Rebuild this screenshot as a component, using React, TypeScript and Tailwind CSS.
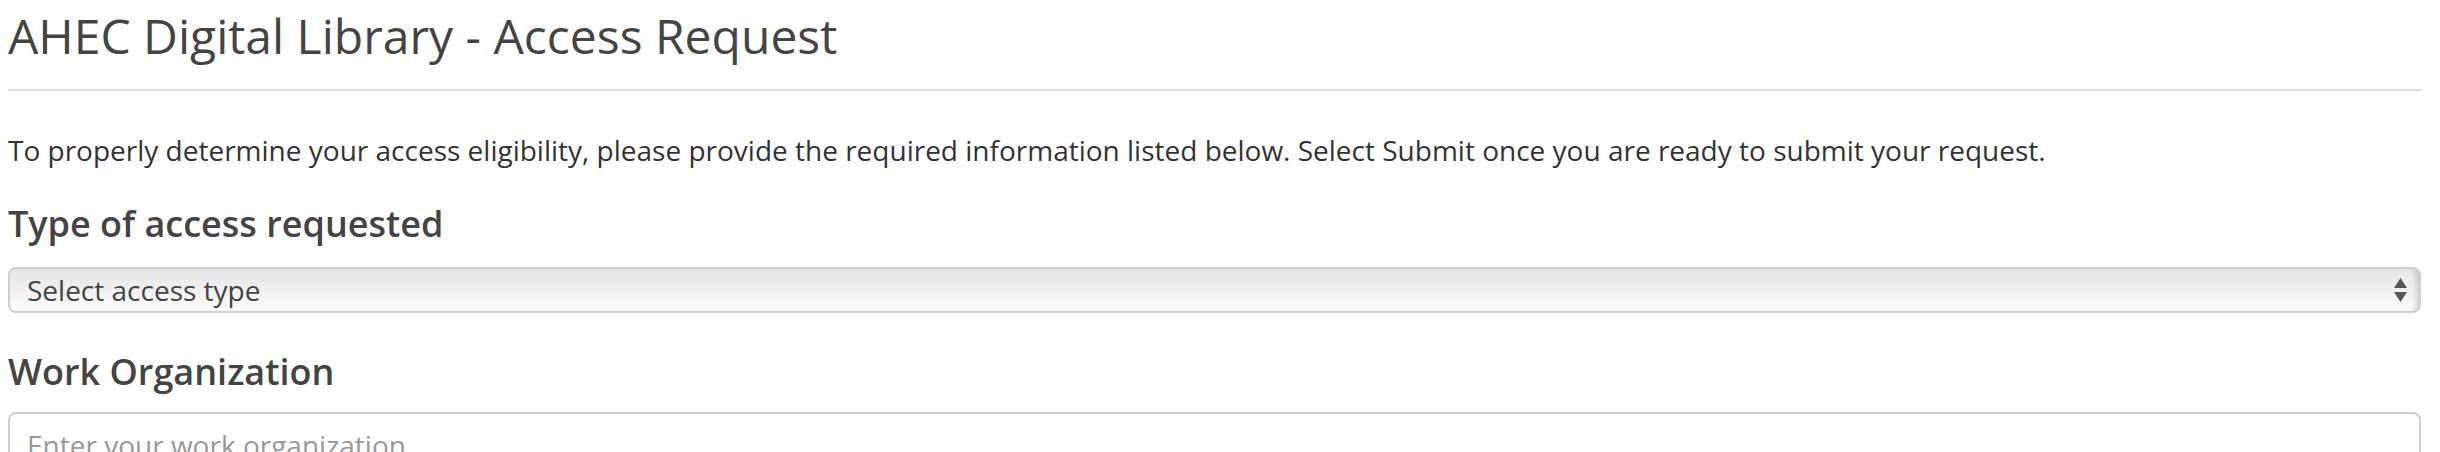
import React from 'react';

const App: React.FC = () => {
  return (
    <div
      className="min-h-[452px] bg-white pl-2 pr-[19px] text-[#333]"
      style={{ fontFamily: '"Open Sans", "Liberation Sans", sans-serif' }}
    >
      <h1 className="pt-[8px] text-[48px] leading-[56px] font-normal text-[#444]">
        AHEC Digital Library - Access Request
      </h1>
      <hr className="mt-[25px] border-0 border-t-2 border-[#dedede]" />

      <p className="mt-[39px] text-[28px] leading-[40px] text-[#333]">
        To properly determine your access eligibility, please provide the required information listed below. Select
        Submit once you are ready to submit your request.
      </p>

      <label className="mt-[34px] block text-[36px] leading-[40px] font-semibold text-[#444]">
        Type of access requested
      </label>
      <div className="relative mt-[23px]">
        <select
          defaultValue=""
          className="block h-[46px] w-full appearance-none rounded-[8px] border-2 border-[#cfcfcf] bg-gradient-to-b from-[#e6e6e6] to-[#fbfbfb] pl-[17px] text-[28px] text-[#444] shadow-[inset_-7px_0_6px_-5px_rgba(0,0,0,0.18)] outline-none"
          style={{ fontFamily: '"Open Sans", "Liberation Sans", sans-serif' }}
        >
          <option value="">Select access type</option>
          <option value="student">Student</option>
          <option value="faculty">Faculty</option>
          <option value="staff">Staff</option>
        </select>
        <svg
          className="pointer-events-none absolute right-[14px] top-[11px]"
          width="13"
          height="24"
          viewBox="0 0 13 24"
        >
          <polygon points="6.5,0 13,10 0,10" fill="#555" />
          <polygon points="0,14 13,14 6.5,24" fill="#555" />
        </svg>
      </div>

      <label className="mt-[39px] block text-[36px] leading-[40px] font-semibold text-[#444]">
        Work Organization
      </label>
      <input
        type="text"
        placeholder="Enter your work organization"
        className="mt-[20px] block h-[60px] w-full rounded-[8px] border-2 border-[#cfcfcf] bg-white px-[17px] pt-[6px] text-[28px] text-[#444] placeholder:text-[#999] outline-none"
        style={{ fontFamily: '"Open Sans", "Liberation Sans", sans-serif' }}
      />
    </div>
  );
};

export default App;
